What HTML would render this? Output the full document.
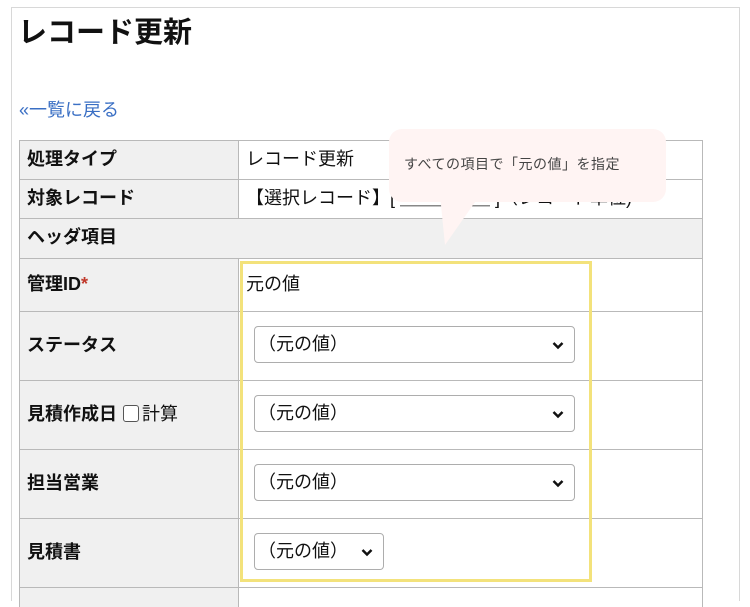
<!DOCTYPE html>
<html><head><meta charset="utf-8"><style>
*{box-sizing:border-box;margin:0;padding:0}
html,body{width:750px;height:607px;overflow:hidden}
body{background:#fff;position:relative;font-family:"Liberation Sans","Noto Sans CJK JP",sans-serif;color:#111}
.frame{position:absolute;left:11px;top:7px;width:729px;height:594px;border:1px solid #d8d8d8;border-bottom:none}
h1{position:absolute;left:18px;top:13px;font-size:29px;line-height:40px;font-weight:bold}
.back{position:absolute;left:19px;top:97px;font-size:18px;line-height:26px;color:#3a6fc4}
.cell{position:absolute;border:1px solid #b9b9b9;font-size:18px;display:flex;align-items:center;line-height:22px}
.lab{background:#f0f0f0;font-weight:bold;padding-left:7px;padding-bottom:3px}
.val{background:#fff;padding-left:7px;padding-bottom:3px}
.sel{position:absolute;height:37px;border:1px solid #adadad;border-radius:4px;background:#fff;font-size:18px;padding-left:3px;padding-bottom:3px;display:flex;align-items:center}
.sel svg{position:absolute;right:10px;top:14px}
.yel{position:absolute;left:240px;top:261px;width:352px;height:321px;border:3px solid #f3e27b}
.bub{position:absolute;left:389px;top:129px;width:277px;height:73px;background:#fff4f3;border-radius:13px;font-size:14px;color:#444;padding:25px 0 0 15px;letter-spacing:0.5px}
.cb{display:inline-block;width:16px;height:17px;border:1.5px solid #555;border-radius:3px;margin:0 3px 0 6px;background:#fff}
</style></head><body>
<div class="frame"></div>
<h1>レコード更新</h1>
<div class="back">«一覧に戻る</div>

<div class="cell lab" style="left:19px;top:140px;width:220px;height:40px">処理タイプ</div>
<div class="cell val" style="left:238px;top:140px;width:465px;height:40px">レコード更新</div>
<div class="cell lab" style="left:19px;top:179px;width:220px;height:40px">対象レコード</div>
<div class="cell val" style="left:238px;top:179px;width:465px;height:40px;white-space:nowrap">【選択レコード】[ ＿＿＿＿＿ ]（レコード単位)</div>
<div class="cell lab" style="left:19px;top:218px;width:684px;height:41px">ヘッダ項目</div>
<div class="cell lab" style="left:19px;top:258px;width:220px;height:54px">管理ID<span style="color:#c0392b">*</span></div>
<div class="cell val" style="left:238px;top:258px;width:465px;height:54px">元の値</div>
<div class="cell lab" style="left:19px;top:311px;width:220px;height:70px">ステータス</div>
<div class="cell val" style="left:238px;top:311px;width:465px;height:70px"></div>
<div class="cell lab" style="left:19px;top:380px;width:220px;height:70px">見積作成日<span class="cb"></span><span style="font-weight:normal">計算</span></div>
<div class="cell val" style="left:238px;top:380px;width:465px;height:70px"></div>
<div class="cell lab" style="left:19px;top:449px;width:220px;height:70px">担当営業</div>
<div class="cell val" style="left:238px;top:449px;width:465px;height:70px"></div>
<div class="cell lab" style="left:19px;top:518px;width:220px;height:70px">見積書</div>
<div class="cell val" style="left:238px;top:518px;width:465px;height:70px"></div>
<div class="cell lab" style="left:19px;top:587px;width:220px;height:40px"></div>
<div class="cell val" style="left:238px;top:587px;width:465px;height:40px"></div>

<div class="sel" style="left:254px;top:326px;width:321px">（元の値）<svg width="12" height="9" viewBox="0 0 12 9"><path d="M1.5 2l4.5 4.5L10.5 2" fill="none" stroke="#111" stroke-width="2.5"/></svg></div>
<div class="sel" style="left:254px;top:395px;width:321px">（元の値）<svg width="12" height="9" viewBox="0 0 12 9"><path d="M1.5 2l4.5 4.5L10.5 2" fill="none" stroke="#111" stroke-width="2.5"/></svg></div>
<div class="sel" style="left:254px;top:464px;width:321px">（元の値）<svg width="12" height="9" viewBox="0 0 12 9"><path d="M1.5 2l4.5 4.5L10.5 2" fill="none" stroke="#111" stroke-width="2.5"/></svg></div>
<div class="sel" style="left:254px;top:533px;width:130px">（元の値）<svg width="12" height="9" viewBox="0 0 12 9"><path d="M1.5 2l4.5 4.5L10.5 2" fill="none" stroke="#111" stroke-width="2.5"/></svg></div>

<div class="yel"></div>
<svg style="position:absolute;left:430px;top:195px" width="60" height="55"><path d="M10 0L50 0L15 50Z" fill="#fff4f3"/></svg>
<div class="bub">すべての項目で「元の値」を指定</div>
</body></html>
